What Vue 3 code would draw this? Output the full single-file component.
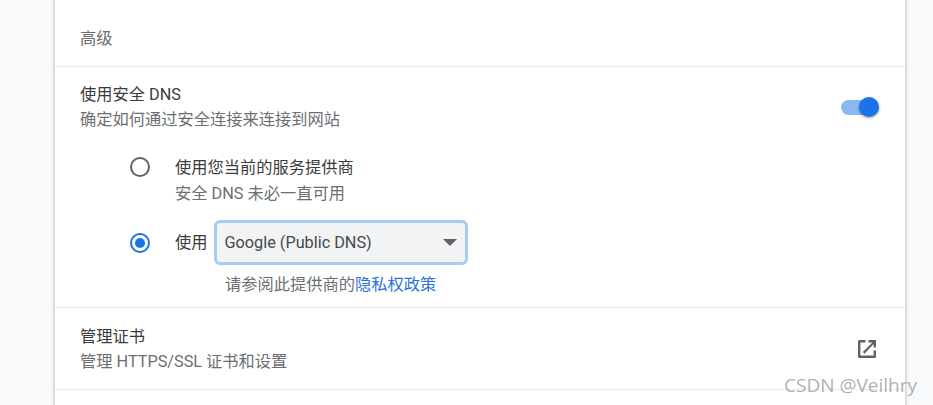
<script setup>
const title = '高级'
</script>

<template>
  <div class="page">
    <main class="card">
      <header class="heading">{{ title }}</header>

      <section class="dns">
        <div class="row-head">
          <div>
            <div class="primary">使用安全 DNS</div>
            <div class="secondary">确定如何通过安全连接来连接到网站</div>
          </div>
          <div class="toggle">
            <span class="track"></span>
            <span class="knob"></span>
          </div>
        </div>

        <div class="options">
          <div class="option">
            <span class="radio"></span>
            <div>
              <div class="primary">使用您当前的服务提供商</div>
              <div class="secondary wide">安全 DNS 未必一直可用</div>
            </div>
          </div>
          <div class="option custom">
            <span class="radio checked"><span class="dot"></span></span>
            <span class="primary">使用</span>
            <div class="select">
              <span>Google (Public DNS)</span>
              <span class="caret"></span>
            </div>
          </div>
          <div class="policy">请参阅此提供商的<a class="link">隐私权政策</a></div>
        </div>
      </section>

      <section class="cert">
        <div>
          <div class="primary">管理证书</div>
          <div class="secondary">管理 HTTPS/SSL 证书和设置</div>
        </div>
        <svg class="launch" viewBox="0 0 20 20" width="20" height="20" aria-hidden="true">
          <path d="M8.5 1H2.6C1.7 1 1 1.7 1 2.6v14.8C1 18.3 1.7 19 2.6 19h14.8c.9 0 1.6-.7 1.6-1.6v-5.9h-2.4v5H3.4V3.4h5.1V1z" fill="#5f6368"/>
          <path d="M11.5 1v2.4h3.9L5.8 13l1.7 1.7 9.1-9.6v3.4H19V1h-7.5z" fill="#5f6368"/>
        </svg>
      </section>
    </main>
    <div class="watermark">CSDN @Veilhry</div>
  </div>
</template>

<style scoped>
.page {
  position: relative;
  width: 933px;
  height: 405px;
  overflow: hidden;
  background: #f8f9fa;
  font-family: Roboto, "Noto Sans CJK SC", sans-serif;
  font-size: 16.25px;
  color: #202124;
}
.card {
  width: 850px;
  height: 405px;
  margin-left: 55px;
  background: #fff;
  box-shadow: 0 0 3px 1px rgba(60, 64, 67, 0.28);
}
.heading {
  height: 39px;
  padding: 27px 0 0 25px;
  line-height: 24px;
  color: #696d72;
  border-bottom: 1px solid #ececed;
}
.primary {
  line-height: 24px;
  color: #3a3b3e;
}
.secondary {
  line-height: 24px;
  margin-top: 1px;
  color: #6b6f74;
}
.secondary.wide {
  margin-top: 2px;
}
.dns {
  height: 241px;
  border-bottom: 1px solid #ececed;
  padding: 16px 26px 0 25px;
  box-sizing: border-box;
}
.row-head {
  display: flex;
  justify-content: space-between;
  align-items: center;
}
.toggle {
  position: relative;
  width: 38px;
  height: 20px;
  flex: none;
  margin-top: -2px;
}
.track {
  position: absolute;
  left: 0;
  top: 3px;
  width: 34px;
  height: 15px;
  border-radius: 8px;
  background: #8ab8f5;
}
.knob {
  position: absolute;
  right: 0;
  top: 0;
  width: 20px;
  height: 20px;
  border-radius: 50%;
  background: #1a73e8;
  box-shadow: 0 1px 3px rgba(0, 0, 0, 0.4);
}
.options {
  padding: 24px 0 0 50px;
}
.option {
  display: flex;
  align-items: flex-start;
}
.radio {
  flex: none;
  box-sizing: border-box;
  width: 20px;
  height: 20px;
  margin: 1px 25px 0 0;
  border: 2px solid #5f6368;
  border-radius: 50%;
  display: flex;
  align-items: center;
  justify-content: center;
}
.radio.checked {
  border-color: #1a73e8;
  margin-top: 0;
}
.dot {
  width: 10px;
  height: 10px;
  border-radius: 50%;
  background: #1a73e8;
}
.custom {
  align-items: center;
  margin-top: 14px;
}
.select {
  box-sizing: border-box;
  width: 254px;
  height: 45px;
  margin-left: 6px;
  padding: 0 8px;
  display: flex;
  align-items: center;
  justify-content: space-between;
  background: #f1f3f4;
  border: 3px solid #a8caf7;
  border-radius: 6px;
  color: #45484c;
}
.caret {
  width: 0;
  height: 0;
  border-left: 7px solid transparent;
  border-right: 7px solid transparent;
  border-top: 7px solid #5f6368;
}
.policy {
  margin: 8px 0 0 95px;
  line-height: 24px;
  color: #6b6f74;
}
.link {
  color: #2a72dc;
}
.cert {
  height: 82px;
  box-sizing: border-box;
  padding: 17px 28px 0 25px;
  display: flex;
  justify-content: space-between;
  align-items: flex-start;
  border-bottom: 1px solid #ececed;
}
.launch {
  margin-top: 14px;
}
.watermark {
  position: absolute;
  left: 784px;
  top: 373px;
  font-family: "Open Sans", sans-serif;
  font-size: 19px;
  line-height: 24px;
  color: rgba(125, 125, 125, 0.62);
}
</style>
